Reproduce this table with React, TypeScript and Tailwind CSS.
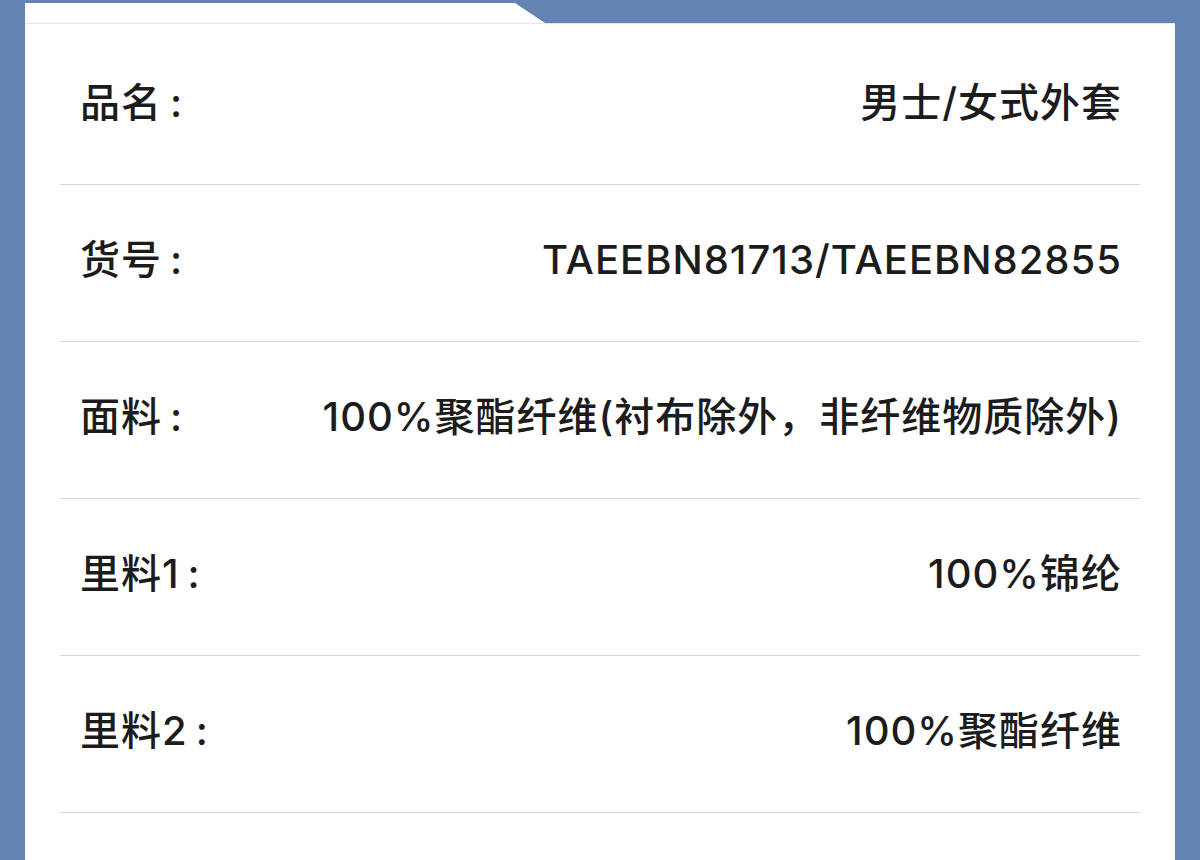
const rows: { label: string; value: string }[] = [
  { label: "品名", value: "男士/女式外套" },
  { label: "货号", value: "TAEEBN81713/TAEEBN82855" },
  { label: "面料", value: "100%聚酯纤维(衬布除外，非纤维物质除外)" },
  { label: "里料1", value: "100%锦纶" },
  { label: "里料2", value: "100%聚酯纤维" },
];

export default function App() {
  return (
    <div className="h-[860px] overflow-hidden bg-[#6384b2] pt-[3px] pl-[25px]">
      {/* tab on top of the card */}
      <div className="h-[20px] w-[520px] bg-white [clip-path:polygon(0_0,490px_0,100%_100%,0_100%)]" />
      <div className="h-[837px] w-[1150px] border-t border-[#e1e7ef] bg-white px-[35px] pt-[4px] font-['Inter','Noto_Sans_CJK_SC',sans-serif] text-[40px] font-medium tracking-[1px] text-[#1c1c1c]">
        {rows.map((row) => (
          <div
            key={row.label}
            className="flex h-[157px] items-center justify-between border-b border-[#d6d6d6] pb-[7px] pl-[20px] pr-[18px]"
          >
            <span className="whitespace-nowrap">
              {row.label}
              <span className="ml-[8px]">:</span>
            </span>
            <span className="whitespace-nowrap">{row.value}</span>
          </div>
        ))}
      </div>
    </div>
  );
}
